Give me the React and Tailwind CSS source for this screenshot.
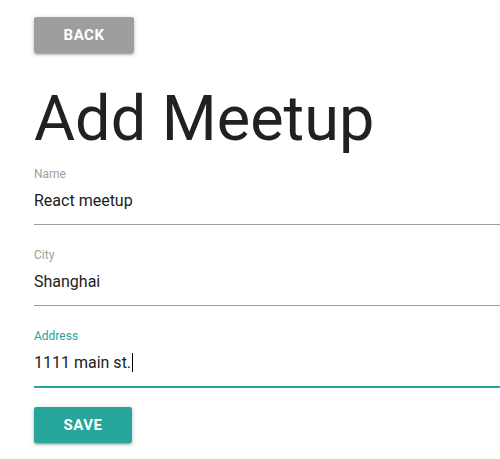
import React from 'react';

const btnShadow =
  'shadow-[0_2px_2px_0_rgba(0,0,0,0.14),0_3px_1px_-2px_rgba(0,0,0,0.12),0_1px_5px_0_rgba(0,0,0,0.2)]';

const Field = ({ label, value, active, caret }) => (
  <div className="mb-[22px]">
    <div className={`h-4 text-[12px] leading-4 ${active ? 'text-[#26a69a]' : 'text-[#9e9e9e]'}`}>{label}</div>
    <div
      className={`h-[43px] pt-[7px] border-b text-[16px] leading-6 text-[#212121] ${
        active ? 'border-[#26a69a] shadow-[0_1px_0_0_#26a69a]' : 'border-[#9e9e9e]'
      }`}
    >
      {value}
      {caret && <span className="inline-block w-px h-[19px] bg-black align-[-4px] ml-px" />}
    </div>
  </div>
);

const App = () => {
  return (
    <div className="min-h-[459px] bg-white pl-[34px] pt-[17px] font-['Roboto',sans-serif]">
      <button
        type="button"
        className={`w-[100px] h-9 rounded-[2px] bg-[#9e9e9e] text-white text-[15px] font-bold tracking-[0.5px] uppercase ${btnShadow}`}
      >
        Back
      </button>

      <h1 className="mt-[31px] mb-3 text-[63px] leading-[70px] font-normal text-[#212121]">Add Meetup</h1>

      <form>
        <Field label="Name" value="React meetup" />
        <Field label="City" value="Shanghai" />
        <Field label="Address" value="1111 main st." active caret />
      </form>

      <button
        type="button"
        className={`-mt-[2px] w-[98px] h-9 rounded-[2px] bg-[#26a69a] text-white text-[15px] font-bold tracking-[0.5px] uppercase ${btnShadow}`}
      >
        Save
      </button>
    </div>
  );
};

export default App;
